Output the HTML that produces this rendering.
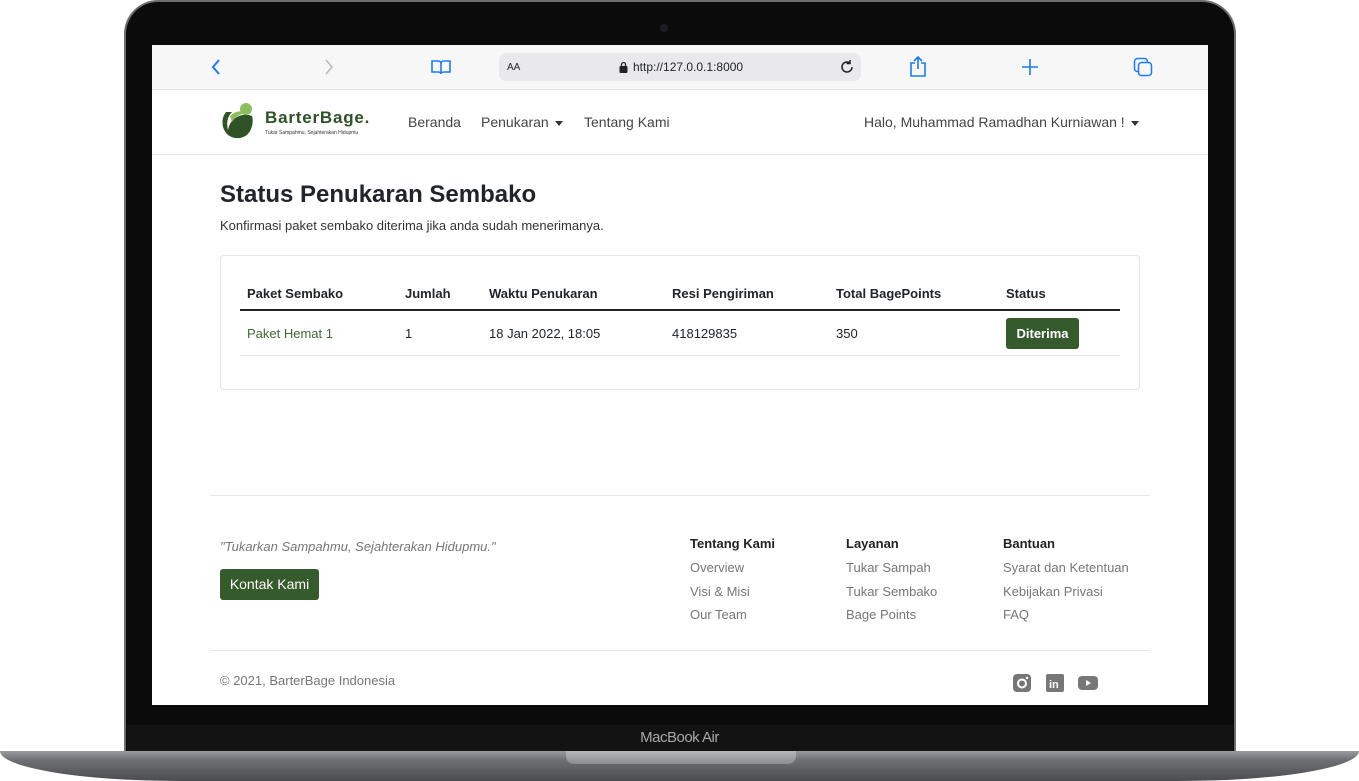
<!DOCTYPE html>
<html><head><style>
*{margin:0;padding:0;box-sizing:border-box}
body{width:1359px;height:781px;background:#fff;position:relative;overflow:hidden;font-family:"Liberation Sans",sans-serif;color:#212529}
.abs{position:absolute}
.lid{left:124px;top:0;width:1112px;height:752px;background:#0b0b0b;border-radius:34px 34px 0 0;border:2px solid #6d6e72;border-bottom:none}
.screen{left:152px;top:45px;width:1056px;height:660px;background:#fff;overflow:hidden}
.bar{left:0;top:0;width:1056px;height:45px;background:#f7f7f7;border-bottom:1px solid #e3e3e3}
.url{left:347px;top:8px;width:362px;height:28px;background:#e9e9eb;border-radius:7px;font-size:12px}
.nav{top:45px;left:0;width:1056px;height:65px;border-bottom:1px solid #e8e8e8}
.navl{font-size:14px;color:#444}
.caret{display:inline-block;border-left:4px solid transparent;border-right:4px solid transparent;border-top:5px solid #333;vertical-align:middle;margin-left:6px}
.foot{font-size:13px;color:#777}
.fh{font-size:13px;font-weight:bold;color:#222}
</style></head><body>
<div class="abs lid"></div>
<div class="abs" style="left:660px;top:24px;width:8px;height:8px;border-radius:50%;background:#1c1c22"></div>
<div class="abs screen">
 <div class="abs bar">
  <svg class="abs" style="left:58px;top:13px" width="12" height="18"><path d="M9 2L3 9l6 7" stroke="#1a7cf5" stroke-width="2" fill="none"/></svg>
  <svg class="abs" style="left:171px;top:13px" width="12" height="18"><path d="M3 2l6 7-6 7" stroke="#bbb" stroke-width="1.6" fill="none"/></svg>
  <svg class="abs" style="left:278px;top:13px" width="22" height="18"><path d="M2 3h6c2 0 3 1 3 3v10c0-1-1-2-3-2H2zM20 3h-6c-2 0-3 1-3 3v10c0-1 1-2 3-2h6z" stroke="#1a7cf5" stroke-width="1.6" fill="none"/></svg>
  <div class="abs url"><span class="abs" style="left:8px;top:9px;font-size:10px">AA</span>
   <svg class="abs" style="left:120px;top:8px" width="9" height="12"><rect x="0.5" y="5" width="8" height="7" rx="1" fill="#222"/><path d="M2.5 5V3.5a2 2 0 0 1 4 0V5" stroke="#222" stroke-width="1.3" fill="none"/></svg>
   <span class="abs" style="left:134px;top:7px">http://127.0.0.1:8000</span>
   <svg class="abs" style="left:340px;top:6px" width="16" height="16"><path d="M13 8a5 5 0 1 1-2-4M11 1v3.5h-3.5" stroke="#222" stroke-width="1.5" fill="none"/></svg></div>
  <svg class="abs" style="left:756px;top:10px" width="20" height="24"><path d="M7 8H3v13h14V8h-4M10 14V2M6 6l4-4 4 4" stroke="#1a7cf5" stroke-width="1.6" fill="none"/></svg>
  <svg class="abs" style="left:868px;top:13px" width="20" height="18"><path d="M10 1v16M2 9h16" stroke="#1a7cf5" stroke-width="1.6"/></svg>
  <svg class="abs" style="left:981px;top:12px" width="22" height="22"><rect x="1.5" y="1.5" width="13" height="13" rx="3" stroke="#1a7cf5" stroke-width="1.5" fill="none"/><rect x="5.5" y="5.5" width="13" height="13" rx="3" stroke="#1a7cf5" stroke-width="1.5" fill="#f7f7f7"/></svg>
 </div>
 <div class="abs nav">
  <svg class="abs" style="left:66px;top:10px" width="40" height="44"><path d="M8 12C0 22 6 40 22 38 34 36 36 22 34 16 24 12 12 18 10 30 8 22 10 16 14 12z" fill="#2f5226"/><circle cx="28" cy="9" r="6" fill="#8dbf5e"/><path d="M12 16c6-6 14-6 20-2-8-2-14 2-18 8z" fill="#8dbf5e"/></svg>
  <div class="abs" style="left:113px;top:18px;font-size:17px;font-weight:bold;color:#2f5226;letter-spacing:0.8px">BarterBage.</div>
  <div class="abs" style="left:113px;top:40px;font-size:5px;color:#333">Tukar Sampahmu, Sejahterakan Hidupmu</div>
  <div class="abs navl" style="left:256px;top:24px">Beranda</div>
  <div class="abs navl" style="left:329px;top:24px">Penukaran<span class="caret"></span></div>
  <div class="abs navl" style="left:432px;top:24px">Tentang Kami</div>
  <div class="abs navl" style="left:712px;top:24px">Halo, Muhammad Ramadhan Kurniawan !<span class="caret"></span></div>
 </div>
 <div class="abs" style="left:68px;top:136px;font-size:24px;font-weight:bold">Status Penukaran Sembako</div>
 <div class="abs" style="left:68px;top:173px;font-size:13px;color:#333">Konfirmasi paket sembako diterima jika anda sudah menerimanya.</div>
 <div class="abs" style="left:68px;top:210px;width:920px;height:135px;border:1px solid #e5e5e5;border-radius:4px">
  <div class="abs" style="left:19px;top:53px;width:880px;height:2px;background:#222"></div>
  <div class="abs" style="left:19px;top:99px;width:880px;height:1px;background:#e5e5e5"></div>
  <div class="abs" style="left:26px;top:30px;font-size:13px;font-weight:bold">Paket Sembako</div>
  <div class="abs" style="left:184px;top:30px;font-size:13px;font-weight:bold">Jumlah</div>
  <div class="abs" style="left:268px;top:30px;font-size:13px;font-weight:bold">Waktu Penukaran</div>
  <div class="abs" style="left:451px;top:30px;font-size:13px;font-weight:bold">Resi Pengiriman</div>
  <div class="abs" style="left:615px;top:30px;font-size:13px;font-weight:bold">Total BagePoints</div>
  <div class="abs" style="left:785px;top:30px;font-size:13px;font-weight:bold">Status</div>
  <div class="abs" style="left:26px;top:70px;font-size:13px;color:#3f6a33">Paket Hemat 1</div>
  <div class="abs" style="left:184px;top:70px;font-size:13px">1</div>
  <div class="abs" style="left:268px;top:70px;font-size:13px">18 Jan 2022, 18:05</div>
  <div class="abs" style="left:451px;top:70px;font-size:13px">418129835</div>
  <div class="abs" style="left:615px;top:70px;font-size:13px">350</div>
  <div class="abs" style="left:785px;top:62px;width:73px;height:31px;background:#355a2b;border-radius:3px;color:#fff;font-size:13px;font-weight:bold;text-align:center;line-height:31px">Diterima</div>
 </div>
 <div class="abs" style="left:58px;top:450px;width:940px;height:1px;background:#e8e8e8"></div>
 <div class="abs foot" style="left:68px;top:494px;font-style:italic">"Tukarkan Sampahmu, Sejahterakan Hidupmu."</div>
 <div class="abs" style="left:68px;top:524px;width:99px;height:31px;background:#355a2b;border-radius:3px;color:#fff;font-size:14px;text-align:center;line-height:31px">Kontak Kami</div>
 <div class="abs fh" style="left:538px;top:491px">Tentang Kami</div>
 <div class="abs foot" style="left:538px;top:511px;line-height:23.5px">Overview<br>Visi &amp; Misi<br>Our Team</div>
 <div class="abs fh" style="left:694px;top:491px">Layanan</div>
 <div class="abs foot" style="left:694px;top:511px;line-height:23.5px">Tukar Sampah<br>Tukar Sembako<br>Bage Points</div>
 <div class="abs fh" style="left:851px;top:491px">Bantuan</div>
 <div class="abs foot" style="left:851px;top:511px;line-height:23.5px">Syarat dan Ketentuan<br>Kebijakan Privasi<br>FAQ</div>
 <div class="abs" style="left:58px;top:605px;width:940px;height:1px;background:#e8e8e8"></div>
 <div class="abs foot" style="left:68px;top:628px">© 2021, BarterBage Indonesia</div>
 <svg class="abs" style="left:861px;top:629px" width="18" height="18"><rect width="18" height="18" rx="4" fill="#777"/><circle cx="9" cy="9.5" r="4" stroke="#fff" stroke-width="2" fill="none"/><circle cx="14" cy="4" r="1.2" fill="#fff"/></svg>
 <svg class="abs" style="left:894px;top:629px" width="18" height="18"><rect width="18" height="18" rx="2" fill="#777"/><text x="3" y="14" font-size="11" font-weight="bold" fill="#fff" font-family="Liberation Sans">in</text></svg>
 <svg class="abs" style="left:926px;top:631px" width="20" height="14"><rect width="20" height="14" rx="4" fill="#777"/><path d="M8 4l5 3-5 3z" fill="#fff"/></svg>
</div>
<div class="abs" style="left:127px;top:725px;width:1106px;height:27px;background:#131313"></div>
<div class="abs" style="left:0;top:729px;width:1359px;text-align:center;font-size:15px;color:#a8a8a8;letter-spacing:-0.5px">MacBook Air</div>
<div class="abs" style="left:0;top:751px;width:1359px;height:30px;background:linear-gradient(#9a9ba0,#6f7075 30%,#4b4c50);border-radius:0 0 180px 180px / 0 0 30px 30px"></div>
<div class="abs" style="left:566px;top:751px;width:230px;height:13px;background:linear-gradient(#b6b7bb,#8b8c90);border-radius:0 0 8px 8px"></div>
</body></html>
